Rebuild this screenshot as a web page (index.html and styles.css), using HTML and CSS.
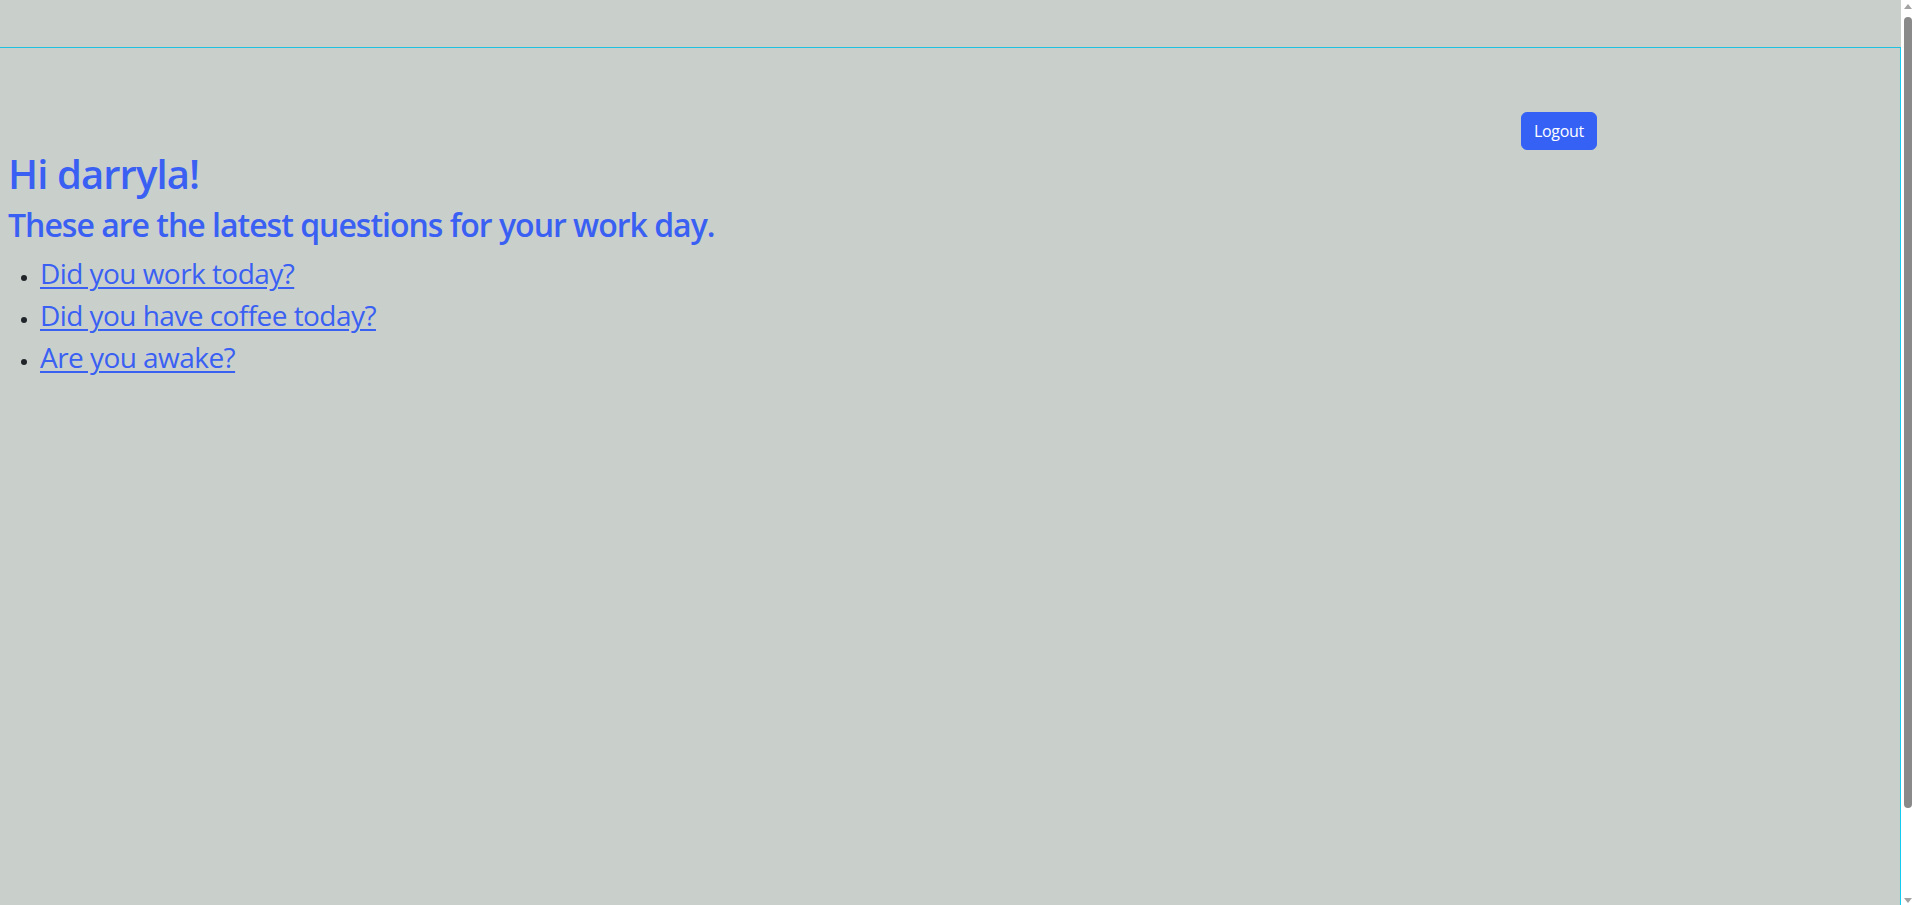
FILE: index.html
```html
<!DOCTYPE html>
<html lang="en">
<head>
<meta charset="utf-8">
<title>Questions</title>
<link rel="stylesheet" href="styles.css">
</head>
<body>
<div class="page">
  <div class="topbar"></div>
  <div class="frame">
    <div class="container">
      <div class="actions">
        <button class="btn" type="button">Logout</button>
      </div>
    </div>
    <div class="content">
      <h1 class="title">Hi darryla!</h1>
      <h2 class="subtitle">These are the latest questions for your work day.</h2>
      <ul class="questions">
        <li><a href="#">Did you work today?</a></li>
        <li><a href="#">Did you have coffee today?</a></li>
        <li><a href="#">Are you awake?</a></li>
      </ul>
    </div>
  </div>
</div>
<div class="scrollbar" aria-hidden="true">
  <div class="arrow arrow-up"></div>
  <div class="thumb"></div>
  <div class="track-rest"></div>
  <div class="arrow arrow-down"></div>
</div>
</body>
</html>
```
FILE: styles.css
```css
html {
  background: #c9d0cc;
}
body {
  margin: 0;
  height: 905px;
  overflow: hidden;
  display: flex;
  background: #c9d0cc;
  color: #212529;
  font-family: "Open Sans", "Noto Sans", sans-serif;
  font-size: 16px;
  line-height: 1.5;
}
.page {
  flex: 1;
  min-width: 0;
  display: flex;
  flex-direction: column;
}
.topbar {
  height: 47px;
  flex: none;
}
.frame {
  flex: 1;
  border-top: 1px solid #1fc0e0;
  border-right: 1px solid #14c8f2;
}
.container {
  max-width: 1320px;
  margin: 64px auto 0;
  padding: 0 12px;
  box-sizing: border-box;
}
.actions {
  display: flex;
  justify-content: flex-end;
  padding-right: 1px;
}
.btn {
  font-family: inherit;
  font-size: 16px;
  line-height: 1.5;
  letter-spacing: -0.3px;
  padding: 6px 12px;
  color: #ffffff;
  background: #3562f5;
  border: 1px solid #3562f5;
  border-radius: 6px;
  cursor: pointer;
}
.content {
  padding-left: 8px;
}
.title {
  margin: 0 0 8px;
  font-size: 40px;
  font-weight: 600;
  line-height: 1.2;
  letter-spacing: -0.9px;
  color: #3a60f3;
}
.subtitle {
  margin: 0 0 8px;
  font-size: 32px;
  font-weight: 600;
  line-height: 1.2;
  letter-spacing: -1px;
  color: #3a60f3;
}
.questions {
  margin: 0;
  padding-left: 32px;
  font-size: 28px;
  line-height: 1.5;
  letter-spacing: -0.55px;
}
.questions li::marker {
  font-size: 18px;
}
.questions a {
  color: #3a60f3;
  text-decoration: underline;
  text-decoration-thickness: 2px;
  text-underline-offset: 3px;
}
.scrollbar {
  width: 13px;
  flex: none;
  background: #ffffff;
  display: flex;
  flex-direction: column;
  align-items: center;
}
.arrow {
  width: 0;
  height: 0;
  border-left: 4px solid transparent;
  border-right: 4px solid transparent;
  flex: none;
}
.arrow-up {
  margin-top: 4px;
  border-bottom: 5px solid #a3a3a3;
}
.arrow-down {
  margin-bottom: 2px;
  border-top: 5px solid #a3a3a3;
}
.thumb {
  flex: none;
  margin-top: 8px;
  margin-left: 1px;
  width: 8px;
  height: 791px;
  border-radius: 4px;
  background: #8a8a8a;
}
.track-rest {
  flex: 1;
}
```
